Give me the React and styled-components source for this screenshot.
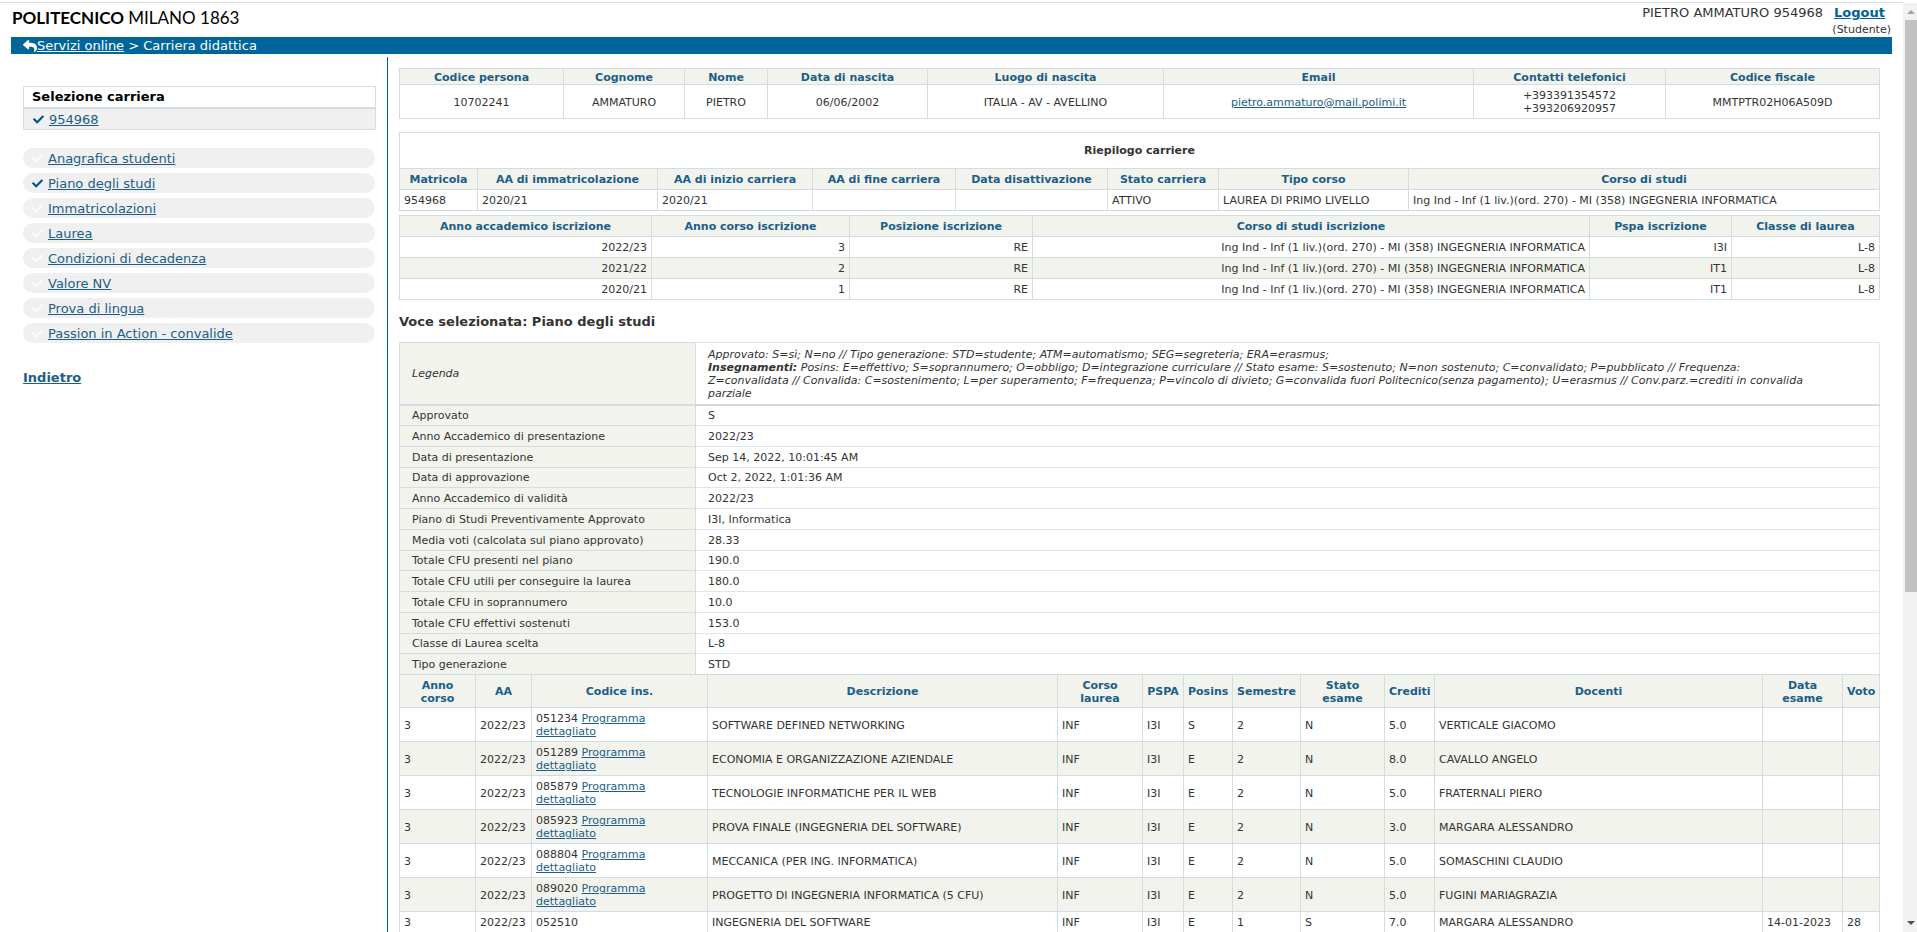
import React from "react";
import styled, { createGlobalStyle } from "styled-components";
import { FaCheck, FaReply } from "react-icons/fa";

const line = "#d3dde1";
const shade = "#f2f3ed";
const linkBlue = "#1b5e88";

const GlobalStyle = createGlobalStyle`
  * { box-sizing: border-box; }
  body {
    margin: 0;
    background: #fff;
    color: #333;
    font: 11px/13px Verdana, "DejaVu Sans", sans-serif;
  }
  a { color: ${linkBlue}; }
`;

const Window = styled.div`
  display: flex;
  height: 100vh;
  padding-top: 2px;
  overflow: hidden;
`;

const Page = styled.div`
  flex: 1;
  min-width: 0;
  display: flex;
  flex-direction: column;
  padding: 0 11px;
  border-top: 1px solid #d9dcdf;
`;

const Header = styled.header`
  flex: none;
  display: flex;
  justify-content: space-between;
  height: 34px;
`;

const Logo = styled.div`
  padding: 5px 0 0 1px;
  color: #000;
  font: 17px/20px Lato, sans-serif;
`;

const User = styled.div`
  display: flex;
  flex-direction: column;
  align-items: flex-end;
  padding: 1px 1px 0 0;
`;

const UserName = styled.div`
  display: flex;
  gap: 11px;
  padding-right: 6px;
  font-size: 13px;
  line-height: 18px;

  a {
    font-weight: bold;
    color: #00619a;
  }
`;

const Role = styled.span`
  line-height: 15px;
`;

const Breadcrumb = styled.nav`
  flex: none;
  display: flex;
  align-items: center;
  height: 17px;
  padding-left: 12px;
  background: #006699;
  color: #fff;
  font-size: 13px;
  line-height: 17px;
  white-space: pre;

  a { color: #fff; }
`;

const Columns = styled.div`
  flex: 1;
  display: flex;
  padding-top: 3px;
`;

const Sidebar = styled.aside`
  flex: none;
  width: 377px;
  padding: 29px 11px 0 12px;
  border-right: 1px solid #006080;
  font-size: 13px;
`;

const Career = styled.section`
  border: 1px solid ${line};
  margin-bottom: 18px;
`;

const CareerTitle = styled.h2`
  margin: 0;
  padding-left: 8px;
  border-bottom: 2px solid ${line};
  color: #000;
  font-size: 13px;
  line-height: 20px;
`;

const CareerRow = styled.div`
  display: flex;
  align-items: center;
  gap: 5px;
  height: 20px;
  padding-left: 9px;
  background: #f0f0f0;
`;

const Menu = styled.ul`
  display: flex;
  flex-direction: column;
  gap: 5px;
  margin: 0 1px 27px 0;
  padding: 0;
  list-style: none;
`;

const MenuItem = styled.li`
  display: flex;
  align-items: center;
  gap: 5px;
  height: 20px;
  padding-left: 9px;
  border-radius: 10px;
  background: #f0f0f0;
`;

const CheckIcon = styled(FaCheck)`
  flex: none;
  width: 11px;
  height: 11px;
  color: ${(p) => (p.$on ? "#00598c" : "#fbfbfb")};
`;

const BackArrow = styled(FaReply)`
  width: 14px;
  height: 14px;
`;

const Back = styled.a`
  font-weight: bold;
  line-height: 16px;
`;

const Main = styled.main`
  flex: 1;
  min-width: 0;
  padding: 11px 13px 0 11px;
`;

const Table = styled.table`
  width: 100%;
  height: ${(p) => p.$height || "auto"};
  margin-bottom: ${(p) => p.$gap || "0"};
  border-collapse: collapse;
  table-layout: fixed;

  th, td {
    height: ${(p) => p.$row || "21px"};
    padding: 1px ${(p) => p.$pad || "4px"} 0;
    border: 1px solid ${line};
    text-align: ${(p) => p.$align || "left"};
  }
  tbody tr:nth-child(even) {
    background: ${(p) => (p.$striped ? shade : "transparent")};
  }
  thead th {
    background: ${shade};
    color: ${linkBlue};
    text-align: center;
  }
`;

const PersonTable = styled(Table)`
  thead th { height: 16px; }
`;

const Caption = styled.caption`
  height: 36px;
  padding-top: 1px;
  border: 1px solid ${line};
  border-bottom: 0;
  font-weight: bold;
  line-height: 34px;
`;

const Heading = styled.h1`
  margin: 0 0 11px;
  font-size: 13px;
  line-height: 18px;
`;

const PlanTable = styled(Table)`
  tbody th {
    background: ${shade};
    font-weight: normal;
  }
  td { border-color: #e2e6e8; }
`;

const LegendRow = styled.tr`
  font-style: italic;

  && th, && td {
    height: 60px;
    border-bottom: 2px solid ${line};
  }
  && td { padding-right: 70px; }
`;

const ExamTable = styled(Table)`
  margin-top: -1px;

  tbody tr:last-child td { height: 20px; }
`;

const Scrollbar = styled.div`
  flex: none;
  display: flex;
  flex-direction: column;
  align-items: center;
  width: 14px;
  margin-top: 1px;
  padding: 7px 0 7px 2px;
  background: #f1f1f1;
`;

const Arrow = styled.i`
  border: 4px solid transparent;
  border-top-width: ${(p) => (p.$down ? "4px" : "0")};
  border-bottom-width: ${(p) => (p.$down ? "0" : "4px")};
  border-${(p) => (p.$down ? "top" : "bottom")}-color: ${(p) => (p.$down ? "#505050" : "#a3a3a3")};
`;

const Thumb = styled.div`
  width: 100%;
  height: 62.5%;
  margin: 6px 0 auto;
  background: #c1c1c1;
`;

const Cols = ({ widths }) => (
  <colgroup>
    {widths.map((w, i) => <col key={i} width={w} />)}
  </colgroup>
);

const Head = ({ labels }) => (
  <thead>
    <tr>{labels.map((l) => <th key={l} scope="col">{l}</th>)}</tr>
  </thead>
);

const menu = [
  "Anagrafica studenti", "Piano degli studi", "Immatricolazioni", "Laurea",
  "Condizioni di decadenza", "Valore NV", "Prova di lingua", "Passion in Action - convalide",
];

const course = "Ing Ind - Inf (1 liv.)(ord. 270) - MI (358) INGEGNERIA INFORMATICA";

const enrolments = [
  ["2022/23", "3", "RE", course, "I3I", "L-8"],
  ["2021/22", "2", "RE", course, "IT1", "L-8"],
  ["2020/21", "1", "RE", course, "IT1", "L-8"],
];

const plan = [
  ["Approvato", "S"],
  ["Anno Accademico di presentazione", "2022/23"],
  ["Data di presentazione", "Sep 14, 2022, 10:01:45 AM"],
  ["Data di approvazione", "Oct 2, 2022, 1:01:36 AM"],
  ["Anno Accademico di validità", "2022/23"],
  ["Piano di Studi Preventivamente Approvato", "I3I, Informatica"],
  ["Media voti (calcolata sul piano approvato)", "28.33"],
  ["Totale CFU presenti nel piano", "190.0"],
  ["Totale CFU utili per conseguire la laurea", "180.0"],
  ["Totale CFU in soprannumero", "10.0"],
  ["Totale CFU effettivi sostenuti", "153.0"],
  ["Classe di Laurea scelta", "L-8"],
  ["Tipo generazione", "STD"],
];

const exams = [
  ["051234", true, "SOFTWARE DEFINED NETWORKING", "S", "2", "N", "5.0", "VERTICALE GIACOMO", "", ""],
  ["051289", true, "ECONOMIA E ORGANIZZAZIONE AZIENDALE", "E", "2", "N", "8.0", "CAVALLO ANGELO", "", ""],
  ["085879", true, "TECNOLOGIE INFORMATICHE PER IL WEB", "E", "2", "N", "5.0", "FRATERNALI PIERO", "", ""],
  ["085923", true, "PROVA FINALE (INGEGNERIA DEL SOFTWARE)", "E", "2", "N", "3.0", "MARGARA ALESSANDRO", "", ""],
  ["088804", true, "MECCANICA (PER ING. INFORMATICA)", "E", "2", "N", "5.0", "SOMASCHINI CLAUDIO", "", ""],
  ["089020", true, "PROGETTO DI INGEGNERIA INFORMATICA (5 CFU)", "E", "2", "N", "5.0", "FUGINI MARIAGRAZIA", "", ""],
  ["052510", false, "INGEGNERIA DEL SOFTWARE", "E", "1", "S", "7.0", "MARGARA ALESSANDRO", "14-01-2023", "28"],
];

export default function App() {
  return (
    <>
      <GlobalStyle />
      <Window>
        <Page>
          <Header>
            <Logo><b>POLITECNICO</b> MILANO 1863</Logo>
            <User>
              <UserName>PIETRO AMMATURO 954968 <a href="#logout">Logout</a></UserName>
              <Role>(Studente)</Role>
            </User>
          </Header>
          <Breadcrumb>
            <BackArrow />
            <a href="#servizi">Servizi online</a>
            {" > Carriera didattica"}
          </Breadcrumb>
          <Columns>
            <Sidebar>
              <Career>
                <CareerTitle>Selezione carriera</CareerTitle>
                <CareerRow><CheckIcon $on /><a href="#954968">954968</a></CareerRow>
              </Career>
              <Menu>
                {menu.map((label, i) => (
                  <MenuItem key={label}>
                    <CheckIcon $on={i === 1} />
                    <a href={`#voce-${i}`}>{label}</a>
                  </MenuItem>
                ))}
              </Menu>
              <Back href="#indietro">Indietro</Back>
            </Sidebar>
            <Main>
              <PersonTable $align="center" $row="34px" $gap="13px">
                <Cols widths={[164, 121, 83, 160, 236, 310, 192, 214]} />
                <Head labels={["Codice persona", "Cognome", "Nome", "Data di nascita", "Luogo di nascita", "Email", "Contatti telefonici", "Codice fiscale"]} />
                <tbody>
                  <tr>
                    <td>10702241</td>
                    <td>AMMATURO</td>
                    <td>PIETRO</td>
                    <td>06/06/2002</td>
                    <td>ITALIA - AV - AVELLINO</td>
                    <td><a href="mailto:pietro.ammaturo@mail.polimi.it">pietro.ammaturo@mail.polimi.it</a></td>
                    <td>+393391354572<br />+393206920957</td>
                    <td>MMTPTR02H06A509D</td>
                  </tr>
                </tbody>
              </PersonTable>

              <Table $gap="4px">
                <Caption>Riepilogo carriere</Caption>
                <Cols widths={[78, 180, 155, 143, 152, 111, 190, 471]} />
                <Head labels={["Matricola", "AA di immatricolazione", "AA di inizio carriera", "AA di fine carriera", "Data disattivazione", "Stato carriera", "Tipo corso", "Corso di studi"]} />
                <tbody>
                  <tr>
                    <td>954968</td>
                    <td>2020/21</td>
                    <td>2020/21</td>
                    <td />
                    <td />
                    <td>ATTIVO</td>
                    <td>LAUREA DI PRIMO LIVELLO</td>
                    <td>{course}</td>
                  </tr>
                </tbody>
              </Table>

              <Table $align="right" $striped $gap="13px">
                <Cols widths={[252, 198, 183, 557, 142, 148]} />
                <Head labels={["Anno accademico iscrizione", "Anno corso iscrizione", "Posizione iscrizione", "Corso di studi iscrizione", "Pspa iscrizione", "Classe di laurea"]} />
                <tbody>
                  {enrolments.map((row) => (
                    <tr key={row[0]}>{row.map((cell, i) => <td key={i}>{cell}</td>)}</tr>
                  ))}
                </tbody>
              </Table>

              <Heading>Voce selezionata: Piano degli studi</Heading>

              <PlanTable $pad="12px" $row="20px" $height="333px">
                <Cols widths={[296, 1184]} />
                <tbody>
                  <LegendRow>
                    <th scope="row">Legenda</th>
                    <td>
                      Approvato: S=sì; N=no // Tipo generazione: STD=studente; ATM=automatismo; SEG=segreteria; ERA=erasmus;<br />
                      <b>Insegnamenti:</b> Posins: E=effettivo; S=soprannumero; O=obbligo; D=integrazione curriculare // Stato esame: S=sostenuto; N=non sostenuto; C=convalidato; P=pubblicato // Frequenza: Z=convalidata // Convalida: C=sostenimento; L=per superamento; F=frequenza; P=vincolo di divieto; G=convalida fuori Politecnico(senza pagamento); U=erasmus // Conv.parz.=crediti in convalida parziale
                    </td>
                  </LegendRow>
                  {plan.map(([label, value]) => (
                    <tr key={label}>
                      <th scope="row">{label}</th>
                      <td>{value}</td>
                    </tr>
                  ))}
                </tbody>
              </PlanTable>

              <ExamTable $striped $row="33px" $height="259px">
                <Cols widths={[76, 56, 176, 350, 85, 41, 49, 68, 84, 50, 328, 80, 37]} />
                <Head labels={["Anno corso", "AA", "Codice ins.", "Descrizione", "Corso laurea", "PSPA", "Posins", "Semestre", "Stato esame", "Crediti", "Docenti", "Data esame", "Voto"]} />
                <tbody>
                  {exams.map(([code, hasProgram, title, pos, term, state, credits, teacher, date, mark]) => (
                    <tr key={code}>
                      <td>3</td>
                      <td>2022/23</td>
                      <td>{code} {hasProgram && <a href={`#programma-${code}`}>Programma dettagliato</a>}</td>
                      <td>{title}</td>
                      <td>INF</td>
                      <td>I3I</td>
                      <td>{pos}</td>
                      <td>{term}</td>
                      <td>{state}</td>
                      <td>{credits}</td>
                      <td>{teacher}</td>
                      <td>{date}</td>
                      <td>{mark}</td>
                    </tr>
                  ))}
                </tbody>
              </ExamTable>
            </Main>
          </Columns>
        </Page>
        <Scrollbar aria-hidden="true">
          <Arrow />
          <Thumb />
          <Arrow $down />
        </Scrollbar>
      </Window>
    </>
  );
}
